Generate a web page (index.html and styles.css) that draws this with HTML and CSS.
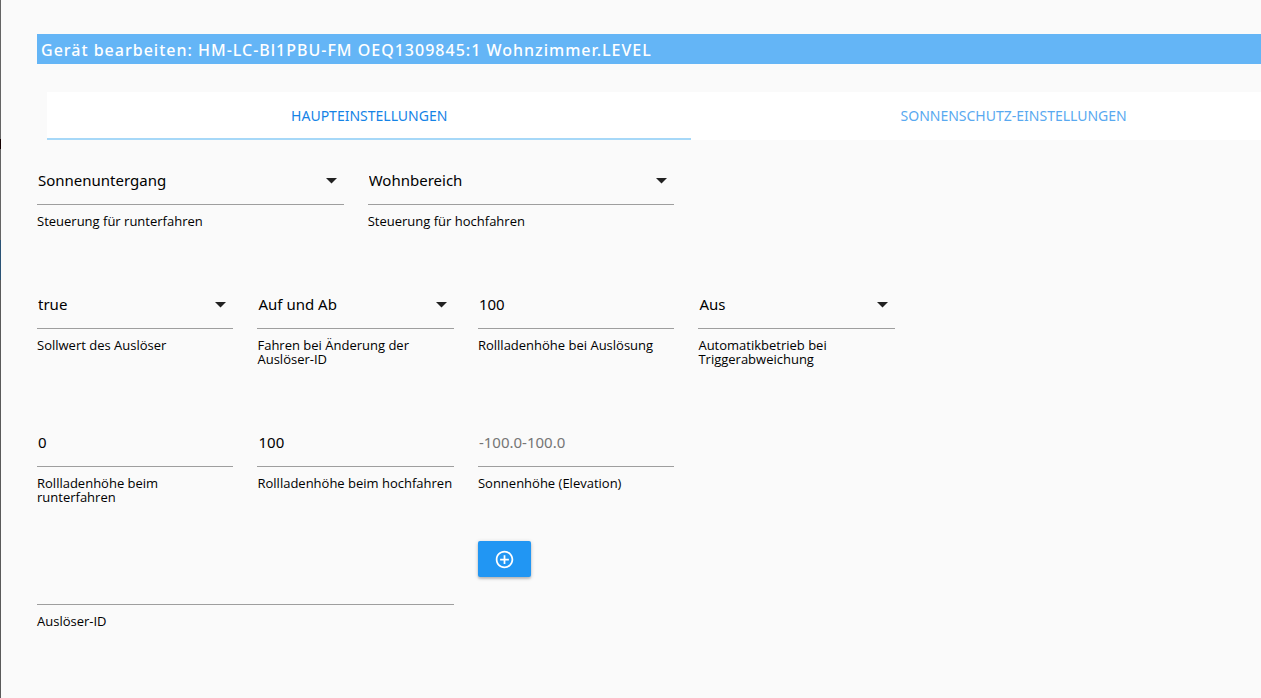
FILE: index.html
```html
<!DOCTYPE html>
<html lang="de">
<head>
<meta charset="utf-8">
<meta name="viewport" content="width=device-width, initial-scale=1">
<title>Gerät bearbeiten</title>
<link rel="stylesheet" href="styles.css">
</head>
<body>
<main class="page">
  <h1 class="title">Gerät bearbeiten: HM-LC-Bl1PBU-FM OEQ1309845:1 Wohnzimmer.LEVEL</h1>
  <nav class="tabs">
    <a class="tab tab-active" href="#haupt">HAUPTEINSTELLUNGEN</a>
    <a class="tab" href="#sonnenschutz">SONNENSCHUTZ-EINSTELLUNGEN</a>
  </nav>
  <form class="form" id="haupt">
    <div class="row">
      <div class="field span-3">
        <div class="control">
          <select class="input" id="down"><option>Sonnenuntergang</option></select>
          <svg class="caret" viewBox="0 0 24 24" aria-hidden="true"><path d="M6 9h11l-5.500 5.500z"/></svg>
        </div>
        <label class="label" for="down">Steuerung für runterfahren</label>
      </div>
      <div class="field span-3">
        <div class="control">
          <select class="input" id="up"><option>Wohnbereich</option></select>
          <svg class="caret" viewBox="0 0 24 24" aria-hidden="true"><path d="M6 9h11l-5.500 5.500z"/></svg>
        </div>
        <label class="label" for="up">Steuerung für hochfahren</label>
      </div>
    </div>
    <div class="row">
      <div class="field span-2">
        <div class="control">
          <select class="input" id="target"><option>true</option></select>
          <svg class="caret" viewBox="0 0 24 24" aria-hidden="true"><path d="M6 9h11l-5.500 5.500z"/></svg>
        </div>
        <label class="label" for="target">Sollwert des Auslöser</label>
      </div>
      <div class="field span-2">
        <div class="control">
          <select class="input" id="drive"><option>Auf und Ab</option></select>
          <svg class="caret" viewBox="0 0 24 24" aria-hidden="true"><path d="M6 9h11l-5.500 5.500z"/></svg>
        </div>
        <label class="label" for="drive">Fahren bei Änderung der Auslöser-ID</label>
      </div>
      <div class="field span-2">
        <div class="control"><input class="input" id="height-trigger" type="text" value="100"></div>
        <label class="label" for="height-trigger">Rollladenhöhe bei Auslösung</label>
      </div>
      <div class="field span-2">
        <div class="control">
          <select class="input" id="auto"><option>Aus</option></select>
          <svg class="caret" viewBox="0 0 24 24" aria-hidden="true"><path d="M6 9h11l-5.500 5.500z"/></svg>
        </div>
        <label class="label" for="auto">Automatikbetrieb bei Triggerabweichung</label>
      </div>
    </div>
    <div class="row">
      <div class="field span-2">
        <div class="control"><input class="input" id="height-down" type="text" value="0"></div>
        <label class="label" for="height-down">Rollladenhöhe beim runterfahren</label>
      </div>
      <div class="field span-2">
        <div class="control"><input class="input" id="height-up" type="text" value="100"></div>
        <label class="label" for="height-up">Rollladenhöhe beim hochfahren</label>
      </div>
      <div class="field span-2">
        <div class="control"><input class="input" id="elevation" type="text" placeholder="-100.0-100.0"></div>
        <label class="label" for="elevation">Sonnenhöhe (Elevation)</label>
      </div>
    </div>
    <div class="row">
      <div class="field span-4">
        <div class="control"><input class="input" id="trigger-id" type="text"></div>
        <label class="label" for="trigger-id">Auslöser-ID</label>
      </div>
      <div class="span-2">
        <button class="add" type="button" aria-label="Auslöser-ID hinzufügen">
          <svg class="add-icon" viewBox="0 0 24 24" aria-hidden="true"><path d="M13 7h-2v4H7v2h4v4h2v-4h4v-2h-4V7zm-1-5C6.480 2 2 6.480 2 12s4.480 10 10 10 10-4.480 10-10S17.520 2 12 2zm0 18c-4.410 0-8-3.590-8-8s3.590-8 8-8 8 3.590 8 8-3.590 8-8 8z"/></svg>
        </button>
      </div>
    </div>
  </form>
</main>
</body>
</html>
```
FILE: styles.css
```css
* {
  box-sizing: border-box;
}

body {
  margin: 0;
  min-height: 100vh;
  overflow: hidden;
  background-color: #fafafa;
  /* edge of the panel behind the dialog */
  background-image: linear-gradient(#646464 139px, #140000 139px, #140000 149px, #646464 149px, #646464 240px, #2a5275 240px, #2a5275 280px, #5a5a5a 280px);
  background-size: 1px 100%;
  background-repeat: no-repeat;
  color: #000;
  font-family: "Noto Sans", "Open Sans", sans-serif;
}

.page {
  width: 103%;
  margin-left: 37px;
  padding-top: 34px;
}

.title {
  margin: 0 0 28px;
  padding: 2px 4px 0;
  background: #64b5f6;
  color: #fff;
  font-size: 16px;
  font-weight: 500;
  line-height: 28px;
  letter-spacing: 1px;
}

.tabs {
  display: flex;
  margin-left: 10px;
  background: #fff;
}

.tab {
  flex: 1;
  height: 48px;
  border-bottom: 2px solid transparent;
  color: #59a9f0;
  font-size: 14px;
  line-height: 48px;
  text-align: center;
  text-decoration: none;
}

.tab-active {
  border-bottom-color: #a6d8f8;
  color: #1583e6;
}

.form {
  display: grid;
  row-gap: 37px;
  padding-top: 1px;
}

.row {
  display: grid;
  grid-template-columns: repeat(12, minmax(0, 1fr));
  column-gap: 24px;
}

.field {
  padding-top: 16px;
}

.span-2 {
  grid-column: span 2;
}

.span-3 {
  grid-column: span 3;
}

.span-4 {
  grid-column: span 4;
}

.control {
  position: relative;
}

.input {
  display: block;
  width: 100%;
  height: 48px;
  margin: 0;
  padding: 0 1px 2px;
  appearance: none;
  border: 0;
  border-bottom: 1px solid #9e9e9e;
  border-radius: 0;
  outline: 0;
  background: transparent;
  color: #000;
  font-family: inherit;
  font-size: 15px;
}

.input::placeholder {
  color: #757575;
}

.caret {
  position: absolute;
  top: 12px;
  right: 0;
  width: 24px;
  height: 24px;
  fill: #212121;
  pointer-events: none;
}

.label {
  display: block;
  padding-top: 9px;
  font-family: "Open Sans", "Noto Sans", sans-serif;
  font-size: 13px;
  line-height: 14px;
}

.add {
  display: flex;
  align-items: center;
  height: 36px;
  padding: 0 16px;
  border: 0;
  border-radius: 2px;
  background: #2196f3;
  box-shadow: 0 2px 2px rgba(0, 0, 0, 0.14), 0 1px 4px rgba(0, 0, 0, 0.2);
}

.add-icon {
  width: 21px;
  height: 21px;
  fill: #fff;
}
```
